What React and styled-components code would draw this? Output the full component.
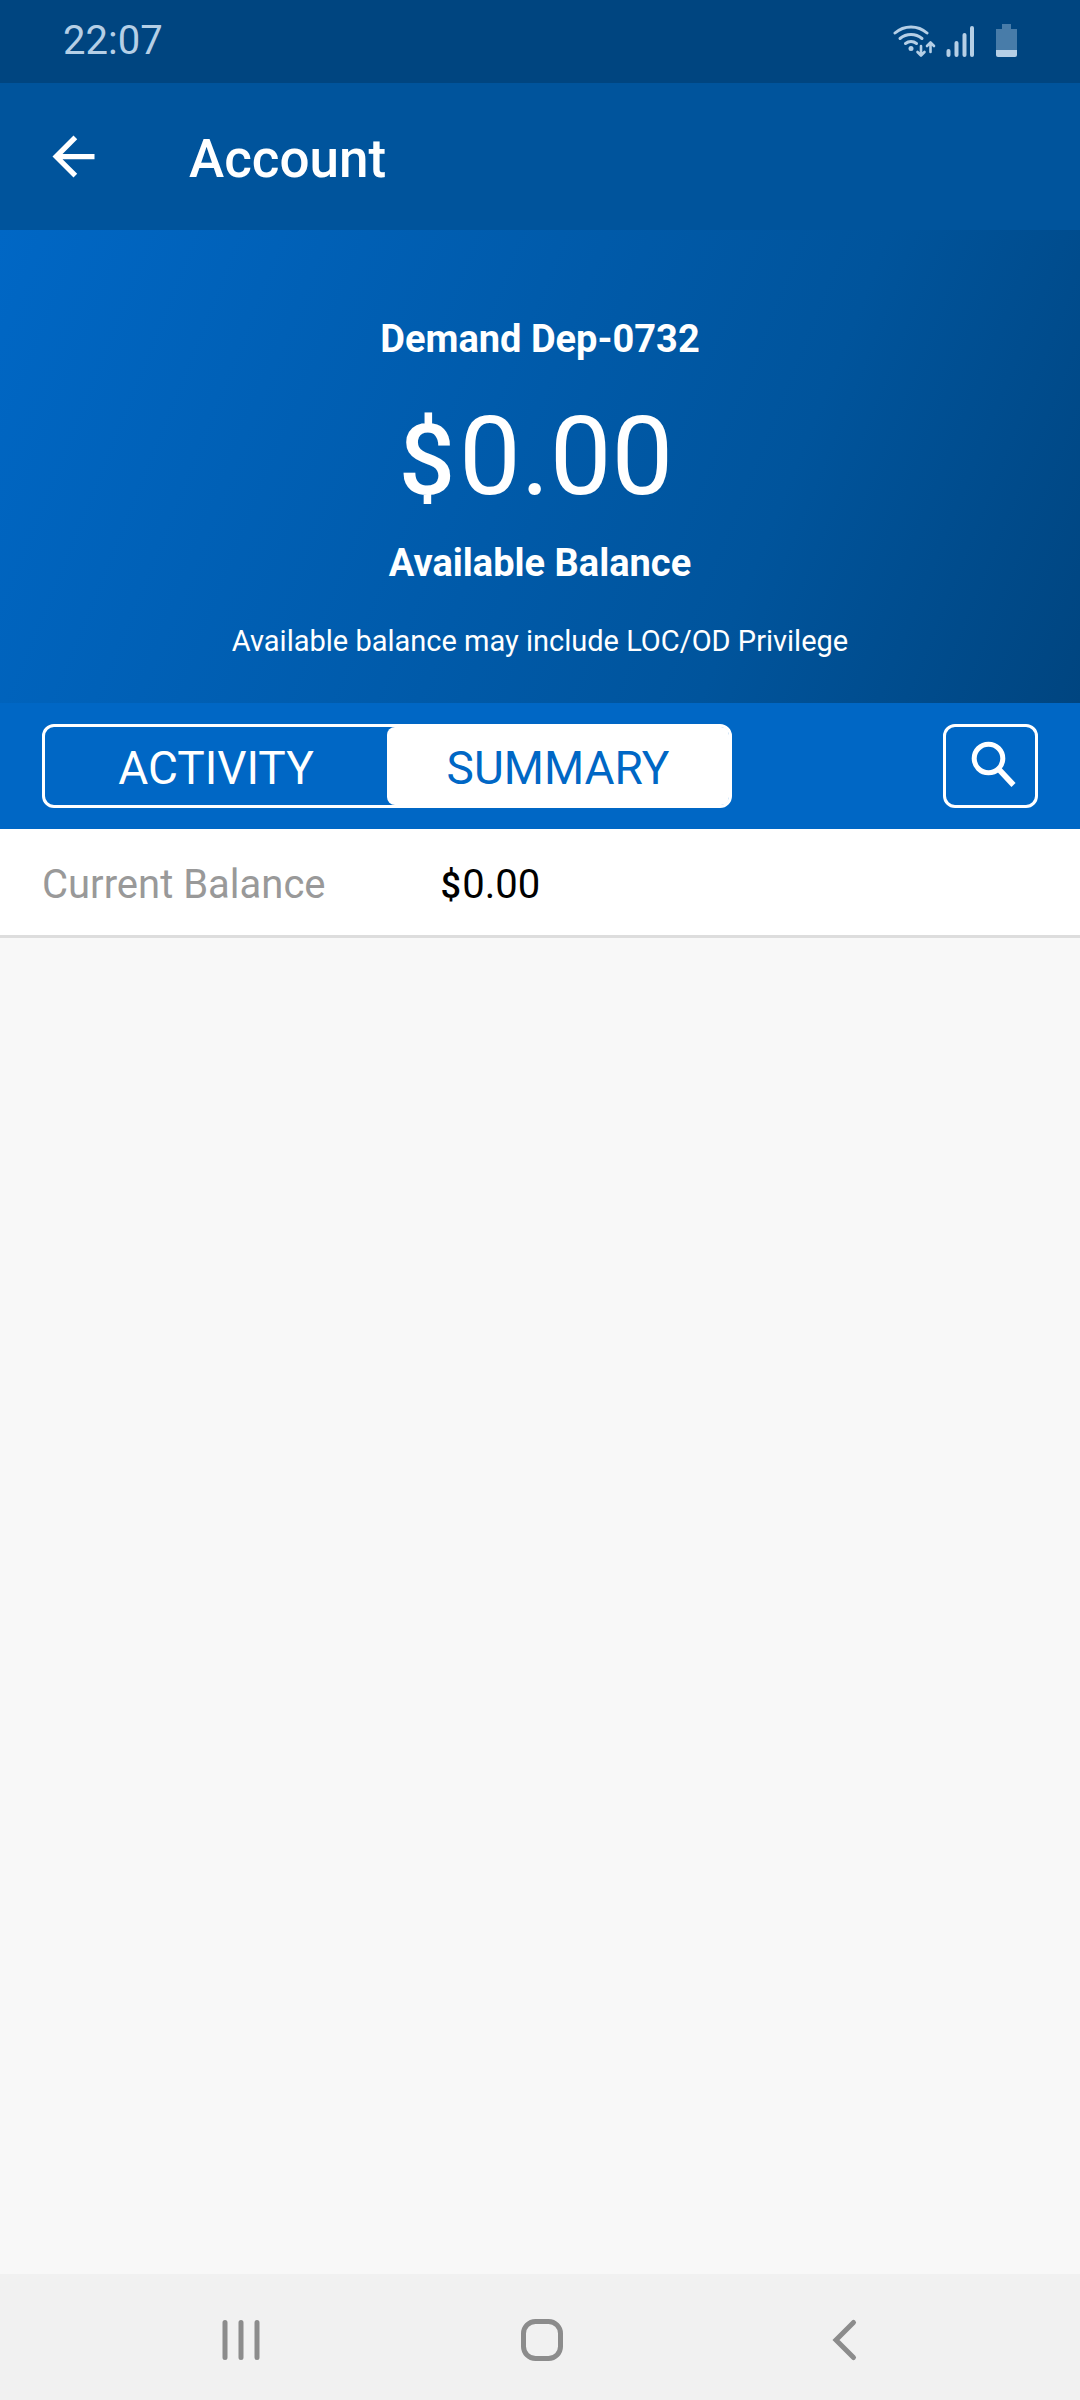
import { useState } from 'react';
import styled, { createGlobalStyle, ThemeProvider } from 'styled-components';

const theme = {
  colors: {
    primary: '#0067c5',
    primaryDark: '#00549c',
    primaryDarker: '#004580',
    status: '#b5cfe6',
    background: '#f8f8f8',
    surface: '#ffffff',
    border: '#dddddd',
    label: '#999999',
    text: '#000000',
    navBar: '#f1f1f1',
    navIcon: '#8c8c8c',
  },
};

const GlobalStyle = createGlobalStyle`
  *, *::before, *::after {
    box-sizing: border-box;
  }
  body {
    margin: 0;
    font-family: Roboto, sans-serif;
    background-color: ${({ theme }) => theme.colors.background};
  }
  button {
    padding: 0;
    border: none;
    background: none;
    color: inherit;
    font: inherit;
    cursor: pointer;
  }
  svg {
    display: block;
  }
`;

const Screen = styled.div`
  display: flex;
  flex-direction: column;
  min-height: 100vh;
`;

const StatusBar = styled.div`
  display: flex;
  align-items: center;
  justify-content: space-between;
  height: 83px;
  padding: 0 63px 2px;
  font-size: 40px;
  line-height: 48px;
  color: ${({ theme }) => theme.colors.status};
  background-color: ${({ theme }) => theme.colors.primaryDarker};
`;

const AppBar = styled.header`
  display: flex;
  align-items: center;
  gap: 84px;
  height: 147px;
  padding: 0 42px;
  color: #fff;
  background-color: ${({ theme }) => theme.colors.primaryDark};
`;

const AppTitle = styled.h1`
  margin: 0;
  padding-top: 4px;
  font-size: 53px;
  line-height: 64px;
  font-weight: 500;
`;

const Hero = styled.section`
  display: flex;
  flex-direction: column;
  align-items: center;
  padding: 85px 42px 44px;
  color: #fff;
  text-align: center;
  background-image: linear-gradient(
    112deg,
    ${({ theme }) => theme.colors.primary},
    ${({ theme }) => theme.colors.primaryDark} 70%,
    ${({ theme }) => theme.colors.primaryDarker}
  );
`;

const HeroLabel = styled.p`
  margin: 0;
  font-size: 38px;
  line-height: 48px;
  font-weight: 700;
`;

const HeroAmount = styled.p`
  margin: 36px 0 24px;
  padding-right: 8px;
  font-size: 110px;
  line-height: 116px;
`;

const HeroNote = styled.p`
  margin: 36px 0 0;
  font-size: 29px;
  line-height: 36px;
`;

const Currency = styled.span`
  margin-right: 0.04em;
  font-size: 0.9em;
  line-height: 1;
  font-weight: 500;
`;

const TabBar = styled.div`
  display: flex;
  align-items: center;
  justify-content: space-between;
  height: 126px;
  padding: 0 42px;
  background-color: ${({ theme }) => theme.colors.primary};
`;

const Segments = styled.div`
  display: flex;
  flex: 0 1 690px;
  height: 84px;
  border: 3px solid #fff;
  border-radius: 12px;
`;

const Segment = styled.button`
  flex: 1;
  padding-top: 4px;
  font-size: 46px;
  line-height: 56px;
  border-radius: 8px;
  color: ${({ $active, theme }) => ($active ? theme.colors.primary : '#fff')};
  background-color: ${({ $active }) => ($active ? '#fff' : 'transparent')};
`;

const SearchButton = styled.button`
  display: flex;
  align-items: center;
  justify-content: center;
  width: 95px;
  height: 84px;
  border: 3px solid #fff;
  border-radius: 12px;
  color: #fff;
`;

const DetailList = styled.dl`
  margin: 0;
`;

const DetailRow = styled.div`
  display: grid;
  grid-template-columns: 2fr 3fr;
  align-items: center;
  height: 109px;
  padding: 6px 42px 0;
  font-size: 40px;
  line-height: 48px;
  border-bottom: 3px solid ${({ theme }) => theme.colors.border};
  background-color: ${({ theme }) => theme.colors.surface};
`;

const DetailLabel = styled.dt`
  color: ${({ theme }) => theme.colors.label};
`;

const DetailValue = styled.dd`
  margin: 0;
  color: ${({ theme }) => theme.colors.text};
`;

const NavBar = styled.nav`
  display: grid;
  grid-template-columns: repeat(3, 1fr);
  align-items: center;
  height: 126px;
  margin-top: auto;
  padding: 6px 86px 0 90px;
  color: ${({ theme }) => theme.colors.navIcon};
  background-color: ${({ theme }) => theme.colors.navBar};
`;

const NavButton = styled.button`
  display: flex;
  justify-content: center;
`;

const StatusIcons = () => (
  <svg width="124" height="34" viewBox="0 0 124 34" fill="none" aria-hidden="true">
    <g stroke="currentColor" strokeWidth="3" strokeLinecap="round">
      <path d="M2 9a24 24 0 0 1 32 0" />
      <path d="M7 14.500a17 17 0 0 1 22 0" />
      <path d="M12.500 19.500a9 9 0 0 1 11 0" />
    </g>
    <g stroke="currentColor" strokeWidth="2.600" strokeLinecap="round" strokeLinejoin="round">
      <path d="M28 22v9M24.500 28l3.500 3.500 3.500-3.500" />
      <path d="M37.500 28v-9M34 22l3.500-3.500 3.500 3.500" />
    </g>
    <circle cx="18" cy="24.500" r="2.500" fill="currentColor" />
    <g fill="currentColor">
      <rect x="53.500" y="25" width="4" height="8" rx="2" />
      <rect x="61.500" y="17" width="4" height="16" rx="2" />
      <rect x="69.500" y="9" width="4" height="24" rx="2" />
      <rect x="77" y="2" width="4" height="31" rx="2" />
      <path d="M109 0h9v5h6v21h-21v-21h6z" opacity="0.400" />
      <path d="M103 26h21v5q0 2-2 2h-17q-2 0-2-2z" />
    </g>
  </svg>
);

const BackArrowIcon = () => (
  <svg width="63" height="63" viewBox="0 0 24 24" fill="currentColor" aria-hidden="true">
    <path d="M20 11H7.830l5.590-5.590L12 4l-8 8 8 8 1.410-1.410L7.830 13H20v-2z" />
  </svg>
);

const SearchIcon = () => (
  <svg width="50" height="50" viewBox="0 0 50 50" fill="none" stroke="currentColor" aria-hidden="true">
    <circle cx="22.500" cy="17.500" r="14.300" strokeWidth="5" />
    <path d="M33 28.500L47.500 44" strokeWidth="5.600" />
  </svg>
);

const RecentsIcon = () => (
  <svg width="44" height="44" viewBox="0 0 44 44" stroke="currentColor" strokeWidth="5" strokeLinecap="round" aria-hidden="true">
    <path d="M6 4.500v35M22 4.500v35M38 4.500v35" />
  </svg>
);

const HomeIcon = () => (
  <svg width="44" height="44" viewBox="0 0 44 44" fill="none" stroke="currentColor" strokeWidth="5" aria-hidden="true">
    <rect x="3.500" y="3.500" width="37" height="37" rx="12" />
  </svg>
);

const BackIcon = () => (
  <svg width="44" height="44" viewBox="0 0 44 44" fill="none" stroke="currentColor" strokeWidth="5" strokeLinecap="round" aria-hidden="true">
    <path d="M32.500 4.500L15 22l17.500 17.500" />
  </svg>
);

const Amount = ({ value }) => (
  <>
    <Currency>$</Currency>
    {value.toFixed(2)}
  </>
);

const TABS = ['ACTIVITY', 'SUMMARY'];

const App = () => {
  const [activeTab, setActiveTab] = useState('SUMMARY');

  return (
    <ThemeProvider theme={theme}>
      <GlobalStyle />
      <Screen>
        <StatusBar>
          <span>22:07</span>
          <StatusIcons />
        </StatusBar>

        <AppBar>
          <button type="button" aria-label="Back">
            <BackArrowIcon />
          </button>
          <AppTitle>Account</AppTitle>
        </AppBar>

        <Hero>
          <HeroLabel>Demand Dep-0732</HeroLabel>
          <HeroAmount>
            <Amount value={0} />
          </HeroAmount>
          <HeroLabel>Available Balance</HeroLabel>
          <HeroNote>Available balance may include LOC/OD Privilege</HeroNote>
        </Hero>

        <TabBar>
          <Segments>
            {TABS.map((tab) => (
              <Segment
                key={tab}
                type="button"
                $active={tab === activeTab}
                aria-pressed={tab === activeTab}
                onClick={() => setActiveTab(tab)}
              >
                {tab}
              </Segment>
            ))}
          </Segments>
          <SearchButton type="button" aria-label="Search">
            <SearchIcon />
          </SearchButton>
        </TabBar>

        <DetailList>
          <DetailRow>
            <DetailLabel>Current Balance</DetailLabel>
            <DetailValue>
              <Amount value={0} />
            </DetailValue>
          </DetailRow>
        </DetailList>

        <NavBar>
          <NavButton type="button" aria-label="Recent apps">
            <RecentsIcon />
          </NavButton>
          <NavButton type="button" aria-label="Home">
            <HomeIcon />
          </NavButton>
          <NavButton type="button" aria-label="Go back">
            <BackIcon />
          </NavButton>
        </NavBar>
      </Screen>
    </ThemeProvider>
  );
};

export default App;
